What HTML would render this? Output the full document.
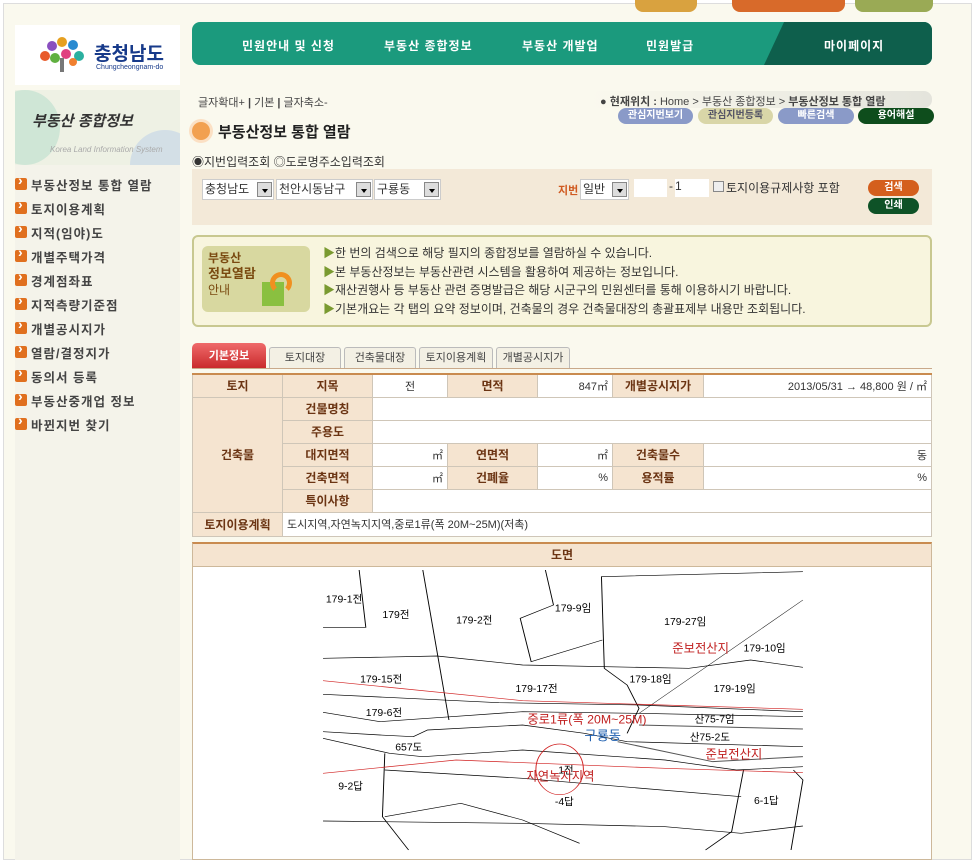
<!DOCTYPE html>
<html><head><meta charset="utf-8"><style>
*{margin:0;padding:0;box-sizing:border-box}
body{width:975px;height:860px;overflow:hidden;background:#fff;font-family:"Liberation Sans","Noto Sans CJK KR","NanumGothic",sans-serif;font-size:12px;color:#333;position:relative}
.a{position:absolute}
#frame{left:3px;top:3px;width:969px;height:857px;background:#faf9ee;border:1px solid #ddd}
.nav{left:192px;top:22px;width:740px;height:43px;background:#1b9a7d;border-radius:8px;overflow:hidden}
.nav span{position:absolute;top:15px;color:#fff;font-weight:bold;font-size:12px;letter-spacing:1px}
.menu div{height:24px;font-size:12.5px;font-weight:bold;color:#444;letter-spacing:1px;padding-left:16px;position:relative}
.menu div:before{content:"";position:absolute;left:0;top:3px;width:12px;height:12px;background:#e0701f;border-radius:2px}
.menu div:after{content:"›";position:absolute;left:3px;top:-3px;color:#fff;font-size:14px;font-weight:bold}
.pill{position:absolute;height:16px;border-radius:8px;color:#fff;font-size:10px;font-weight:bold;text-align:center;line-height:16px}
table{border-collapse:collapse;position:absolute;left:192px;top:373px;width:740px;border-top:2px solid #c98b4f}
td{border:1px solid #cfc6b8;height:23px;font-size:11px;background:#fff;padding:0 4px}
td.h{background:#f5e4d0;color:#6b3413;font-weight:bold;text-align:center;font-size:12px}
.r{text-align:right}
.tab{position:absolute;top:347px;height:21px;background:#f3f0e4;border:1px solid #bbb;border-bottom:none;font-size:11px;text-align:center;line-height:20px;color:#444;border-radius:3px 3px 0 0}
.sel{height:21px;border:1px solid #ccc;background:#fff;font-size:12px;line-height:19px;padding-left:2px;position:absolute}
.sel i{position:absolute;right:1px;top:2px;width:15px;height:15px;background:#ddd;border:1px solid #888}
.sel i:after{content:"";position:absolute;left:4px;top:6px;border:3px solid transparent;border-top:4px solid #000}
</style></head><body>
<div class="a" id="frame"></div>
<div class="a" style="left:635px;top:0;width:62px;height:12px;background:#d9a23f;border-radius:0 0 8px 8px"></div>
<div class="a" style="left:732px;top:0;width:113px;height:12px;background:#d86a2a;border-radius:0 0 8px 8px"></div>
<div class="a" style="left:855px;top:0;width:78px;height:12px;background:#9aaa55;border-radius:0 0 8px 8px"></div>
<div class="a" style="left:15px;top:25px;width:165px;height:60px;background:#fff"></div>
<svg class="a" style="left:35px;top:34px" width="55" height="40"><circle cx="10" cy="22" r="5" fill="#e85a2a"/><circle cx="17" cy="12" r="5" fill="#8a4fc0"/><circle cx="27" cy="8" r="5" fill="#e6a020"/><circle cx="38" cy="11" r="5" fill="#2a8ad0"/><circle cx="44" cy="22" r="5" fill="#2bb0a0"/><circle cx="20" cy="24" r="5" fill="#60b040"/><circle cx="31" cy="20" r="5" fill="#e04080"/><circle cx="38" cy="28" r="4" fill="#f08030"/><rect x="25" y="24" width="4" height="14" fill="#777"/></svg>
<div class="a" style="left:94px;top:39px;font-size:19px;font-weight:bold;color:#173a8a">충청남도</div>
<div class="a" style="left:96px;top:64px;font-size:7px;color:#173a8a">Chungcheongnam-do</div>
<div class="a" style="left:15px;top:90px;width:165px;height:770px;background:#f4f3ea"></div>
<div class="a" style="left:15px;top:90px;width:165px;height:75px;background:#eef1e4;overflow:hidden"><div class="a" style="left:-25px;top:0;width:70px;height:75px;border-radius:50%;background:#cfe6d6"></div><div class="a" style="left:115px;top:40px;width:70px;height:70px;border-radius:50%;background:#d3dfe6"></div></div>
<div class="a" style="left:32px;top:110px;font-size:15px;font-weight:bold;font-style:italic;color:#333">부동산 종합정보</div>
<div class="a" style="left:50px;top:145px;font-size:8px;color:#aaa;font-style:italic">Korea Land Information System</div>
<div class="a menu" style="left:15px;top:175px;width:165px">
<div>부동산정보 통합 열람</div><div>토지이용계획</div><div>지적(임야)도</div><div>개별주택가격</div><div>경계점좌표</div><div>지적측량기준점</div><div>개별공시지가</div><div>열람/결정지가</div><div>동의서 등록</div><div>부동산중개업 정보</div><div>바뀐지번 찾기</div></div>
<div class="a nav"><div class="a" style="top:0;width:200px;height:43px;background:#0e5f4c;transform:skewX(-25deg);transform-origin:0 100%;left:572px"></div>
<span style="left:50px">민원안내 및 신청</span><span style="left:192px">부동산 종합정보</span><span style="left:330px">부동산 개발업</span><span style="left:454px">민원발급</span><span style="left:632px">마이페이지</span></div>
<div class="a" style="left:198px;top:94px;font-size:11px;color:#444">글자확대+ <b>|</b> 기본 <b>|</b> 글자축소-</div>
<div class="a" style="left:590px;top:91px;width:342px;height:17px;background:linear-gradient(90deg,#faf9ee,#e4e4dc);border-radius:8px"></div>
<div class="a" style="left:600px;top:93px;font-size:11px;color:#444">● <b>현재위치 :</b> Home &gt; 부동산 종합정보 &gt; <b>부동산정보 통합 열람</b></div>
<div class="pill" style="left:618px;top:108px;width:75px;background:#8a9ac8">관심지번보기</div>
<div class="pill" style="left:698px;top:108px;width:75px;background:#d9d6a8;color:#556">관심지번등록</div>
<div class="pill" style="left:778px;top:108px;width:76px;background:#8a9ac8">빠른검색</div>
<div class="pill" style="left:858px;top:108px;width:76px;background:#0e4d1c">용어해설</div>
<div class="a" style="left:192px;top:122px;width:18px;height:18px;border-radius:50%;background:#f2a050;box-shadow:0 0 0 3px #fbe0c4"></div>
<div class="a" style="left:218px;top:121px;font-size:15px;font-weight:bold;color:#222">부동산정보 통합 열람</div>
<div class="a" style="left:192px;top:153px;font-size:12px">◉지번입력조회 ◎도로명주소입력조회</div>
<div class="a" style="left:192px;top:169px;width:740px;height:56px;background:#f3e9d8"></div>
<div class="sel" style="left:202px;top:179px;width:72px">충청남도<i></i></div>
<div class="sel" style="left:276px;top:179px;width:97px">천안시동남구<i></i></div>
<div class="sel" style="left:374px;top:179px;width:67px">구룡동<i></i></div>
<div class="a" style="left:558px;top:182px;font-size:11px;color:#d05a20;font-weight:bold">지번</div>
<div class="sel" style="left:580px;top:179px;width:49px">일반<i></i></div>
<div class="a" style="left:634px;top:179px;width:33px;height:18px;background:#fff"></div>
<div class="a" style="left:669px;top:179px;font-size:12px">-</div>
<div class="a" style="left:675px;top:179px;width:34px;height:18px;background:#fff;font-size:12px">1</div>
<div class="a" style="left:713px;top:181px;width:11px;height:11px;border:1px solid #888;background:#eee"></div>
<div class="a" style="left:726px;top:179px;font-size:12px">토지이용규제사항 포함</div>
<div class="pill" style="left:868px;top:180px;width:51px;background:#d45f1d">검색</div>
<div class="pill" style="left:868px;top:198px;width:51px;background:#0e5227">인쇄</div>
<div class="a" style="left:192px;top:235px;width:740px;height:92px;background:#f8f5de;border:2px solid #c8c890;border-radius:6px"></div>
<div class="a" style="left:202px;top:246px;width:108px;height:66px;background:#d8d8a0;border-radius:6px"></div>
<div class="a" style="left:208px;top:250px;font-size:12px;font-weight:bold;color:#7a4a10;line-height:16px">부동산<br><span style="font-size:13px">정보열람</span><br><span style="font-weight:normal">안내</span></div>
<div class="a" style="left:262px;top:282px;width:22px;height:24px;background:#8ac040"></div>
<div class="a" style="left:270px;top:272px;width:22px;height:22px;border:5px solid #f09020;border-radius:50%;border-bottom-color:transparent"></div>
<div class="a" style="left:323px;top:244px;font-size:12px;line-height:18.5px;color:#333"><span style="color:#7a9a30">▶</span>한 번의 검색으로 해당 필지의 종합정보를 열람하실 수 있습니다.<br><span style="color:#7a9a30">▶</span>본 부동산정보는 부동산관련 시스템을 활용하여 제공하는 정보입니다.<br><span style="color:#7a9a30">▶</span>재산권행사 등 부동산 관련 증명발급은 해당 시군구의 민원센터를 통해 이용하시기 바랍니다.<br><span style="color:#7a9a30">▶</span>기본개요는 각 탭의 요약 정보이며, 건축물의 경우 건축물대장의 총괄표제부 내용만 조회됩니다.</div>
<div class="a" style="left:192px;top:343px;width:74px;height:26px;background:linear-gradient(#ef6a6a,#c8282a);border-radius:5px 5px 0 0;color:#fff;font-weight:bold;font-size:11px;text-align:center;line-height:26px">기본정보</div>
<div class="tab" style="left:269px;width:72px">토지대장</div>
<div class="tab" style="left:344px;width:72px">건축물대장</div>
<div class="tab" style="left:419px;width:74px">토지이용계획</div>
<div class="tab" style="left:496px;width:74px">개별공시지가</div>
<div class="a" style="left:192px;top:368px;width:740px;height:1px;background:#c9a98a"></div>
<table>
<tr><td class="h" style="width:90px">토지</td><td class="h" style="width:90px">지목</td><td style="width:75px;text-align:center">전</td><td class="h" style="width:90px">면적</td><td class="r" style="width:75px">847㎡</td><td class="h" style="width:91px">개별공시지가</td><td class="r">2013/05/31 → 48,800 원 / ㎡</td></tr>
<tr><td class="h" rowspan="5">건축물</td><td class="h">건물명칭</td><td colspan="5"></td></tr>
<tr><td class="h">주용도</td><td colspan="5"></td></tr>
<tr><td class="h">대지면적</td><td class="r">㎡</td><td class="h">연면적</td><td class="r">㎡</td><td class="h">건축물수</td><td class="r">동</td></tr>
<tr><td class="h">건축면적</td><td class="r">㎡</td><td class="h">건폐율</td><td class="r">%</td><td class="h">용적률</td><td class="r">%</td></tr>
<tr><td class="h">특이사항</td><td colspan="5"></td></tr>
<tr><td class="h">토지이용계획</td><td colspan="6" style="height:24px">도시지역,자연녹지지역,중로1류(폭 20M~25M)(저촉)</td></tr>
</table>
<div class="a" style="left:192px;top:542px;width:740px;height:318px;background:#fff;border:1px solid #cdb89a;border-top:2px solid #c98b4f"></div>
<div class="a" style="left:193px;top:544px;width:738px;height:23px;background:#f5e4d0;border-bottom:1px solid #cdb89a;text-align:center;font-weight:bold;color:#6b3413;line-height:22px">도면</div>
<svg class="a" style="left:190px;top:540px" width="745" height="320" viewBox="0 0 1568 960" preserveAspectRatio="none" font-family="Liberation Sans,Noto Sans CJK KR,sans-serif" font-size="22">
<g fill="none" stroke="#000" stroke-width="2">
<polyline points="280,262 370,262 356,90"/>
<polyline points="490,90 545,540"/>
<polyline points="748,90 765,195 695,235 718,365 868,300"/>
<polyline points="1290,95 866,110 872,385 920,435 945,505 920,580"/>
<polyline points="280,355 520,348 700,375 1050,385 1180,360 1290,382"/>
<polyline points="280,463 650,488 945,495 1290,515"/>
<polyline points="280,517 400,545 550,530 700,515 945,520 1290,530"/>
<polyline points="280,575 400,585 470,590 500,570 700,555 830,580 920,605 1290,620"/>
<polyline points="280,595 420,640 490,650 700,630 1000,660 1150,690 1290,680"/>
<polyline points="945,555 1290,567" stroke="#555" stroke-width="3"/>
<polyline points="900,605 1100,665 1290,650" stroke="#555" stroke-width="3"/>
<polyline points="410,640 405,830 460,930"/>
<polyline points="410,690 700,715 1160,770"/>
<polyline points="410,830 570,790 700,840 820,910"/>
<polyline points="280,843 700,850 1000,860 1160,880 1290,858"/>
<polyline points="1165,690 1140,875 1085,930"/>
<polyline points="1270,690 1290,720 1265,930"/>
<polyline points="1290,180 945,520" stroke-width="1.2"/>
</g>
<g fill="none" stroke="#d02020" stroke-width="2">
<polyline points="280,422 700,482 1290,508"/>
<polyline points="280,700 560,660 1000,685 1290,698"/>
<ellipse cx="778" cy="688" rx="50" ry="76"/>
</g>
<g transform="scale(1,1.43)">
<g fill="#000">
<text x="286" y="131">179-1전</text><text x="405" y="164">179전</text><text x="560" y="175">179-2전</text><text x="768" y="150">179-9임</text><text x="998" y="178">179-27임</text><text x="1165" y="234">179-10임</text><text x="358" y="299">179-15전</text><text x="685" y="319">179-17전</text><text x="925" y="299">179-18임</text><text x="1102" y="319">179-19임</text><text x="370" y="369">179-6전</text><text x="1062" y="383">산75-7임</text><text x="1052" y="421">산75-2도</text><text x="432" y="442">657도</text><text x="775" y="490">1전</text><text x="312" y="523">9-2답</text><text x="768" y="556">-4답</text><text x="1187" y="554">6-1답</text>
</g>
<g fill="#c02020" font-size="26"><text x="1015" y="236">준보전산지</text><text x="710" y="385">중로1류(폭 20M~25M)</text><text x="1085" y="458">준보전산지</text><text x="708" y="505">자연녹지지역</text></g>
<text x="830" y="420" fill="#2060b0" font-size="28">구룡동</text>
</g>
</svg>
</body></html>
